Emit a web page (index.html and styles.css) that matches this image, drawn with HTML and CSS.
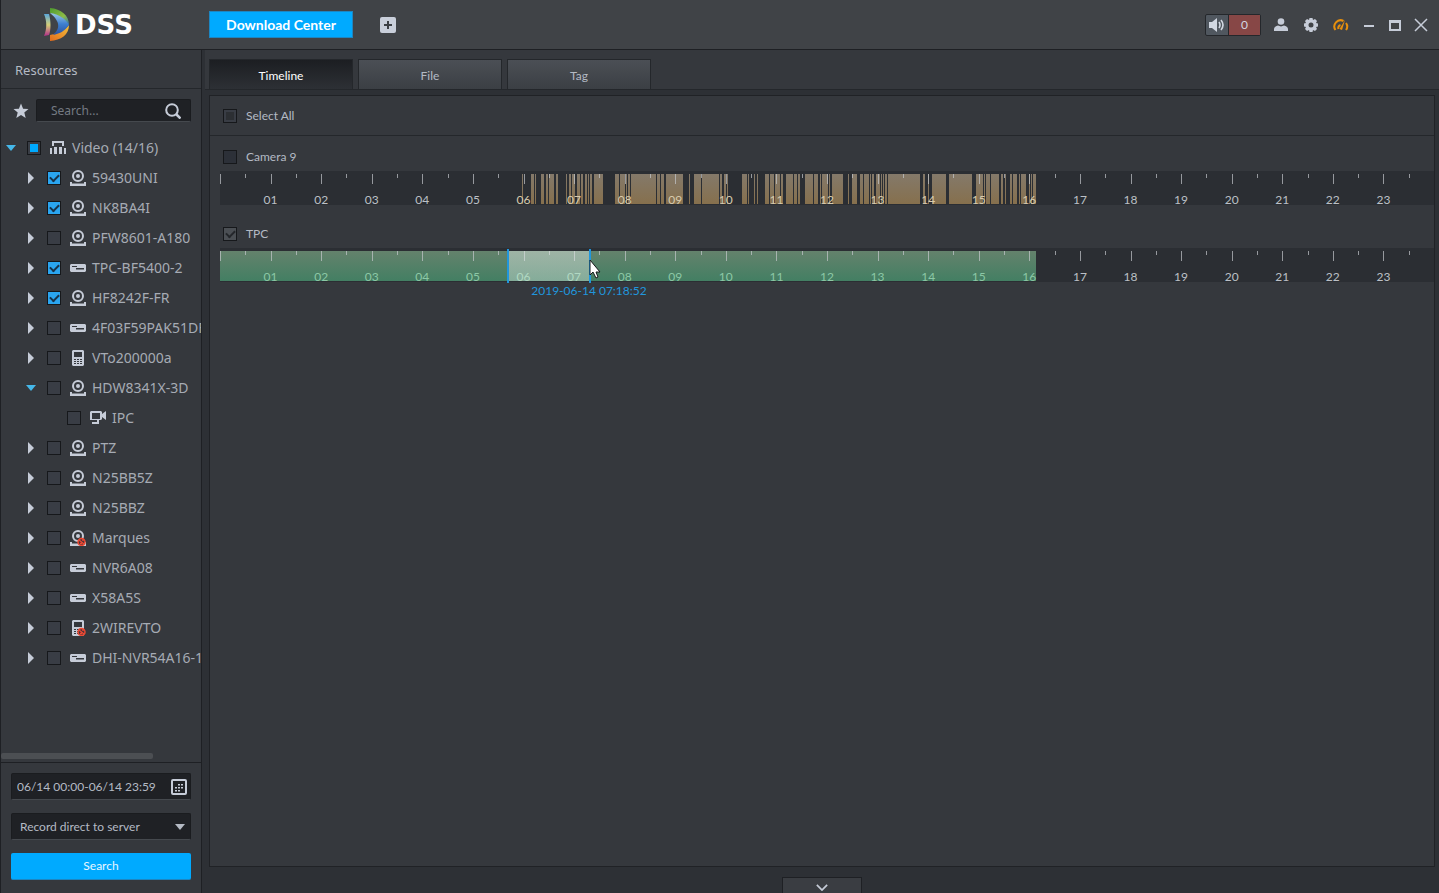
FILE: index.html
```html
<!DOCTYPE html>
<html lang="en">
  <head>
    <meta charset="UTF-8" />
    <meta name="viewport" content="width=device-width, initial-scale=1.0" />

    <title>DSS - Download Center</title>
    <link rel="stylesheet" href="styles.css">
  </head>
  <body>
    <!-- shared icons -->
    <svg class="sprite" aria-hidden="true">
      <symbol id="i-right" viewBox="0 0 12 12"><path d="M3 0l6 6-6 6z" /></symbol>
      <symbol id="i-down" viewBox="0 0 12 12"><path d="M1 3h10L6 9z" /></symbol>
      <symbol id="i-dome" viewBox="0 0 16 16">
        <circle cx="8" cy="6" r="5" fill="none" stroke="currentColor" stroke-width="2" />
        <circle cx="8" cy="6" r="2" />
        <path d="M0 12h2v1.500h12V12h2v4H0z" />
      </symbol>
      <symbol id="i-nvr" viewBox="0 0 16 16">
        <path fill-rule="evenodd" d="M1 4h14l1 1v6l-1 1H1l-1-1V5zM2 6v1h5V6zM6 8v1.500h8V8z" />
      </symbol>
      <symbol id="i-vto" viewBox="0 0 16 16">
        <path fill-rule="evenodd" d="M3 0h10l1 1v14l-1 1H3l-1-1V1zM4 2v5h8V2zM4 9v1h2V9zM7 9v1h2V9zM10 9v1h2V9zM4 11v1h2v-1zM7 11v1h2v-1zM10 11v1h2v-1zM4 13v1h2v-1zM7 13v1h2v-1zM10 13v1h2v-1z" />
      </symbol>
      <symbol id="i-ipc" viewBox="0 0 16 16">
        <path fill-rule="evenodd" d="M1 1h10l1 1v2l4-3v9l-4-3v2l-1 1H9v4H2v-2h5v-2H1L0 10V2zM2 3v6h8V3z" />
      </symbol>
      <symbol id="i-group" viewBox="0 0 16 16">
        <path d="M2 1h12v5h-2V3H4v3H2zM0 8h2v6H0zM4 7h3v7H4zM9 7h3v7H9zM14 8h2v6h-2z" />
      </symbol>
      <symbol id="i-off" viewBox="0 0 16 16">
        <circle cx="11.500" cy="12" r="3.500" fill="#50313a" stroke="#ee4a33" stroke-width="1.500" />
        <path d="M9 10l5 4M10 13.500h2M12 10h2" stroke="#ee4a33" stroke-width="1.300" />
      </symbol>
    </svg>

    <header class="topbar">
      <div class="brand">
        <svg class="brand-mark" viewBox="0 0 26 34">
          <defs>
            <linearGradient id="gTop" x1="0" y1="0" x2="1" y2="1"><stop offset="0" stop-color="#4d9b2f" /><stop offset=".6" stop-color="#8dbb45" /><stop offset="1" stop-color="#2d76b8" /></linearGradient>
            <linearGradient id="gRight" x1="0" y1="0" x2="0" y2="1"><stop offset="0" stop-color="#9cc9e4" /><stop offset=".5" stop-color="#3d7fd0" /><stop offset="1" stop-color="#2b4f9c" /></linearGradient>
            <linearGradient id="gLeft" x1="0" y1="0" x2="0" y2="1"><stop offset="0" stop-color="#5aa8dc" /><stop offset=".5" stop-color="#d5cf78" /><stop offset="1" stop-color="#b02c88" /></linearGradient>
            <linearGradient id="gBottom" x1="0" y1="1" x2="1" y2="0"><stop offset="0" stop-color="#e36b1c" /><stop offset="1" stop-color="#f2c13c" /></linearGradient>
          </defs>
          <path fill="url(#gTop)" d="M6 0c11 1 19 7 19 17-4-6-10-10-19-12z" />
          <path fill="url(#gBottom)" d="M6 33c11-1 19-6 19-16-4 5-10 8-19 10z" />
          <path fill="url(#gRight)" d="M6 5c9 1 16 6 19 12-4 6-10 9-16 10 7-6 8-13-3-22z" />
          <path fill="url(#gLeft)" d="M0 6h5c2 7 2 16 0 21l-5 1c3-7 3-15 0-22z" />
        </svg>
        <span class="brand-name">DSS</span>
      </div>
      <button class="module-tab" type="button">Download Center</button>
      <button class="icon-btn add-btn" type="button" aria-label="Add">
        <svg viewBox="0 0 16 16" width="16" height="16"><rect width="16" height="16" rx="2" fill="#c9cfdb" /><path d="M4 8h8M8 4v8" stroke="#3c4045" stroke-width="2" /></svg>
      </button>
      <div class="top-tools">
        <div class="alarm">
          <button class="alarm-sound" type="button" aria-label="Sound">
            <svg viewBox="0 0 16 16" width="16" height="16"><path d="M0 5h3l5-4v14l-5-4H0z" /><path d="M10 5q2 3 0 6M12 3q4 5 0 10" fill="none" stroke="currentColor" stroke-width="1.600" /></svg>
          </button>
          <span class="alarm-count">0</span>
        </div>
        <div class="app-tools">
          <button class="icon-btn" type="button" aria-label="User">
            <svg viewBox="0 0 16 16" width="16" height="16"><circle cx="8" cy="4.500" r="3.300" /><path d="M1 14V12c0-2 2-3 4-3.500l3 1 3-1c2 .5 4 1.500 4 3.500v2z" /></svg>
          </button>
          <button class="icon-btn" type="button" aria-label="Settings">
            <svg viewBox="0 0 16 16" width="16" height="16"><path fill-rule="evenodd" d="M6.500 1h3l.5 2 2-1 2 2-1 2 2 .5v3l-2 .5 1 2-2 2-2-1-.5 2h-3L6 13l-2 1-2-2 1-2-2-.5v-3L3 6 2 4l2-2 2 1zM8 5.500a2.500 2.500 0 1 0 0 5 2.500 2.500 0 0 0 0-5z" /></svg>
          </button>
          <button class="icon-btn gauge" type="button" aria-label="System load">
            <svg viewBox="0 0 16 16" width="16" height="16"><path d="M2.500 13a6.200 6.200 0 0 1 8-9M13 6a6 6 0 0 1 0 7M5.500 12a3 3 0 0 1 2-4" fill="none" stroke="currentColor" stroke-width="2" /><path d="M12 3L6.500 12l2.500 1z" /></svg>
          </button>
        </div>
        <div class="window-tools">
          <button class="icon-btn" type="button" aria-label="Minimize">
            <svg viewBox="0 0 16 16" width="16" height="16"><path d="M3 8h10v2H3z" /></svg>
          </button>
          <button class="icon-btn" type="button" aria-label="Maximize">
            <svg viewBox="0 0 16 16" width="16" height="16"><path fill-rule="evenodd" d="M2 3h12v11H2zM4 6v6h8V6z" /></svg>
          </button>
          <button class="icon-btn" type="button" aria-label="Close">
            <svg viewBox="0 0 16 16" width="16" height="16"><path d="M2 2l12 12M14 2L2 14" stroke="currentColor" stroke-width="1.500" /></svg>
          </button>
        </div>
      </div>
    </header>

    <div class="workspace">
      <aside class="sidebar">
        <h2 class="sidebar-title">Resources</h2>
        <div class="filter">
          <button class="icon-btn" type="button" aria-label="Favorites">
            <svg viewBox="0 0 16 16" width="16" height="16"><path d="M8 0.500l2.100 5.200 5.400.4-4.200 3.500 1.400 5.400L8 12.100 3.300 15l1.400-5.400L.5 6.100l5.400-.4z" /></svg>
          </button>
          <div class="field filter-field">
            <input type="text" aria-label="Search resources" placeholder="Search..." />
            <button class="icon-btn" type="button" aria-label="Find">
              <svg viewBox="0 0 16 16" width="16" height="16"><circle cx="7" cy="7" r="5.800" fill="none" stroke="currentColor" stroke-width="2" /><path d="M11 11l4.500 4.500" stroke="currentColor" stroke-width="2.500" /></svg>
            </button>
          </div>
        </div>

        <ul class="tree">
          <li class="node root">
            <button class="toggle open" type="button" aria-label="Collapse"><svg><use href="#i-down" /></svg></button>
            <input class="check partial" type="checkbox" id="r0" />
            <svg class="kind"><use href="#i-group" /></svg>
            <label for="r0">Video (14/16)</label>
          </li>
          <li class="node">
            <button class="toggle" type="button" aria-label="Expand"><svg><use href="#i-right" /></svg></button>
            <input class="check" type="checkbox" id="r1" checked />
            <svg class="kind"><use href="#i-dome" /></svg>
            <label for="r1">59430UNI</label>
          </li>
          <li class="node">
            <button class="toggle" type="button" aria-label="Expand"><svg><use href="#i-right" /></svg></button>
            <input class="check" type="checkbox" id="r2" checked />
            <svg class="kind"><use href="#i-dome" /></svg>
            <label for="r2">NK8BA4I</label>
          </li>
          <li class="node">
            <button class="toggle" type="button" aria-label="Expand"><svg><use href="#i-right" /></svg></button>
            <input class="check" type="checkbox" id="r3" />
            <svg class="kind"><use href="#i-dome" /></svg>
            <label for="r3">PFW8601-A180</label>
          </li>
          <li class="node">
            <button class="toggle" type="button" aria-label="Expand"><svg><use href="#i-right" /></svg></button>
            <input class="check" type="checkbox" id="r4" checked />
            <svg class="kind"><use href="#i-nvr" /></svg>
            <label for="r4">TPC-BF5400-2</label>
          </li>
          <li class="node">
            <button class="toggle" type="button" aria-label="Expand"><svg><use href="#i-right" /></svg></button>
            <input class="check" type="checkbox" id="r5" checked />
            <svg class="kind"><use href="#i-dome" /></svg>
            <label for="r5">HF8242F-FR</label>
          </li>
          <li class="node">
            <button class="toggle" type="button" aria-label="Expand"><svg><use href="#i-right" /></svg></button>
            <input class="check" type="checkbox" id="r6" />
            <svg class="kind"><use href="#i-nvr" /></svg>
            <label for="r6">4F03F59PAK51DF</label>
          </li>
          <li class="node">
            <button class="toggle" type="button" aria-label="Expand"><svg><use href="#i-right" /></svg></button>
            <input class="check" type="checkbox" id="r7" />
            <svg class="kind"><use href="#i-vto" /></svg>
            <label for="r7">VTo200000a</label>
          </li>
          <li class="node">
            <button class="toggle open" type="button" aria-label="Collapse"><svg><use href="#i-down" /></svg></button>
            <input class="check" type="checkbox" id="r8" />
            <svg class="kind"><use href="#i-dome" /></svg>
            <label for="r8">HDW8341X-3D</label>
          </li>
          <li class="node leaf">
            <input class="check" type="checkbox" id="r9" />
            <svg class="kind"><use href="#i-ipc" /></svg>
            <label for="r9">IPC</label>
          </li>
          <li class="node">
            <button class="toggle" type="button" aria-label="Expand"><svg><use href="#i-right" /></svg></button>
            <input class="check" type="checkbox" id="r10" />
            <svg class="kind"><use href="#i-dome" /></svg>
            <label for="r10">PTZ</label>
          </li>
          <li class="node">
            <button class="toggle" type="button" aria-label="Expand"><svg><use href="#i-right" /></svg></button>
            <input class="check" type="checkbox" id="r11" />
            <svg class="kind"><use href="#i-dome" /></svg>
            <label for="r11">N25BB5Z</label>
          </li>
          <li class="node">
            <button class="toggle" type="button" aria-label="Expand"><svg><use href="#i-right" /></svg></button>
            <input class="check" type="checkbox" id="r12" />
            <svg class="kind"><use href="#i-dome" /></svg>
            <label for="r12">N25BBZ</label>
          </li>
          <li class="node">
            <button class="toggle" type="button" aria-label="Expand"><svg><use href="#i-right" /></svg></button>
            <input class="check" type="checkbox" id="r13" />
            <svg class="kind"><use href="#i-dome" /><use href="#i-off" /></svg>
            <label for="r13">Marques</label>
          </li>
          <li class="node">
            <button class="toggle" type="button" aria-label="Expand"><svg><use href="#i-right" /></svg></button>
            <input class="check" type="checkbox" id="r14" />
            <svg class="kind"><use href="#i-nvr" /></svg>
            <label for="r14">NVR6A08</label>
          </li>
          <li class="node">
            <button class="toggle" type="button" aria-label="Expand"><svg><use href="#i-right" /></svg></button>
            <input class="check" type="checkbox" id="r15" />
            <svg class="kind"><use href="#i-nvr" /></svg>
            <label for="r15">X58A5S</label>
          </li>
          <li class="node">
            <button class="toggle" type="button" aria-label="Expand"><svg><use href="#i-right" /></svg></button>
            <input class="check" type="checkbox" id="r16" />
            <svg class="kind"><use href="#i-vto" /><use href="#i-off" /></svg>
            <label for="r16">2WIREVTO</label>
          </li>
          <li class="node">
            <button class="toggle" type="button" aria-label="Expand"><svg><use href="#i-right" /></svg></button>
            <input class="check" type="checkbox" id="r17" />
            <svg class="kind"><use href="#i-nvr" /></svg>
            <label for="r17">DHI-NVR54A16-1</label>
          </li>
        </ul>
        <div class="hscroll"><div class="hscroll-thumb"></div></div>

        <form class="query">
          <div class="field date-field">
            <input type="text" aria-label="Period" value="06/14 00:00-06/14 23:59" />
            <button class="icon-btn" type="button" aria-label="Pick dates">
              <svg viewBox="0 0 16 16" width="16" height="16"><rect x="1" y="1" width="14" height="14" rx="1" fill="none" stroke="currentColor" stroke-width="2" /><path d="M7 5h2v1.500H7zM10 5h2v1.500h-2zM4 8h2v1.500H4zM7 8h2v1.500H7zM10 8h2v1.500h-2zM4 11h2v1.500H4zM7 11h2v1.500H7z" /></svg>
            </button>
          </div>
          <div class="field select-field">
            <select aria-label="Record source">
              <option>Record direct to server</option>
            </select>
            <svg class="caret" viewBox="0 0 10 6"><path d="M0 0h10L5 6z" /></svg>
          </div>
          <button class="search-btn" type="button">Search</button>
        </form>
      </aside>

      <main class="main">
        <nav class="tabs">
          <button class="tab active" type="button">Timeline</button>
          <button class="tab" type="button">File</button>
          <button class="tab" type="button">Tag</button>
        </nav>
        <section class="panel">
          <div class="select-all">
            <input class="check muted partial" type="checkbox" id="all" />
            <label for="all">Select All</label>
          </div>
          <div class="channel">
            <div class="channel-head">
              <input class="check" type="checkbox" id="ch1" />
              <label for="ch1">Camera 9</label>
            </div>
            <div class="timeline motion" data-track="camera9"></div>
          </div>
          <div class="channel">
            <div class="channel-head">
              <input class="check muted" type="checkbox" id="ch2" checked />
              <label for="ch2">TPC</label>
            </div>
            <div class="timeline normal" data-track="tpc">
              <div class="range">
                <span class="range-time">2019-06-14 07:18:52</span>
                <svg class="pointer" viewBox="0 0 12 20"><path d="M1 1v15l3-3 3 6 2-1-2-5h4z" fill="#fff" stroke="#16181b" /></svg>
              </div>
            </div>
          </div>
        </section>
        <footer class="drawer">
          <button class="drawer-btn" type="button" aria-label="Show tasks">
            <svg viewBox="0 0 14 8"><path d="M1 1l6 6 6-6" fill="none" stroke="currentColor" stroke-width="2" /></svg>
          </button>
        </footer>
      </main>
    </div>

    <script src="timeline.js"></script>
  </body>
</html>
```
FILE: styles.css
```css
* {
  box-sizing: border-box;
}

body {
  margin: 0;
  height: 100vh;
  display: flex;
  flex-direction: column;
  overflow: hidden;
  border-left: 1px solid #1e2024;
  background: #35383d;
  color: #b4bac4;
  font-family: Lato, sans-serif;
  font-size: 12px;
  line-height: 16px;
}

button,
input,
select {
  font: inherit;
  color: inherit;
  margin: 0;
}

button {
  border: 0;
  padding: 0;
  background: none;
  cursor: pointer;
}

svg {
  display: block;
  flex: none;
  fill: currentColor;
}

.sprite {
  position: absolute;
  width: 0;
  height: 0;
}

.icon-btn {
  flex: none;
  color: #c6ccd8;
}

/* top bar */
.topbar {
  flex: none;
  display: flex;
  align-items: center;
  height: 50px;
  padding-right: 10px;
  border-bottom: 1px solid #1e2024;
  background: #404347;
}

.brand {
  display: flex;
  align-items: center;
  width: 208px;
  padding-left: 43px;
  gap: 5px;
}

.brand-mark {
  width: 26px;
  height: 34px;
}

.brand-name {
  font-family: "DejaVu Sans", sans-serif;
  font-size: 26px;
  line-height: 32px;
  font-weight: bold;
  color: #fff;
}

.module-tab {
  width: 144px;
  height: 27px;
  border: 1px solid #1d86c2;
  background: #00aaff;
  color: #fff;
  font-size: 14px;
  font-weight: bold;
}

.add-btn {
  margin-left: 27px;
}

.top-tools {
  display: flex;
  align-items: center;
  gap: 12px;
  margin-left: auto;
}

.app-tools,
.window-tools {
  display: flex;
  gap: 14px;
}

.window-tools {
  gap: 10px;
}

.alarm {
  display: flex;
  width: 56px;
  height: 22px;
  border: 1px solid #24272b;
  border-radius: 2px;
  background: #50575f;
  color: #d2d8e2;
}

.alarm-sound {
  flex: none;
  width: 22px;
  padding-left: 3px;
}

.alarm-count {
  flex: 1;
  border-left: 1px solid #24272b;
  background: #874746;
  line-height: 20px;
  text-align: center;
}

.icon-btn.gauge {
  color: #e8900c;
}

/* sidebar */
.workspace {
  flex: 1;
  display: flex;
  min-height: 0;
}

.sidebar {
  flex: none;
  display: flex;
  flex-direction: column;
  width: 201px;
  border-right: 1px solid #1e2024;
}

.sidebar-title {
  height: 39px;
  margin: 0;
  padding-left: 14px;
  border-bottom: 1px solid #24272b;
  font-family: "Noto Sans", sans-serif;
  font-size: 13px;
  font-weight: normal;
  line-height: 40px;
}

.filter {
  display: flex;
  align-items: center;
  gap: 7px;
  padding: 10px 10px 11px 12px;
}

.field {
  display: flex;
  align-items: center;
  height: 27px;
  border: 1px solid #1a1c1f;
  border-bottom-color: #45494e;
  border-radius: 2px;
  background: #1f2125;
}

.field input,
.field select {
  flex: 1;
  min-width: 0;
  height: 100%;
  padding: 0;
  border: 0;
  outline: 0;
  background: none;
}

.filter-field {
  flex: 1;
  height: 23px;
  min-width: 0;
  padding: 0 9px 0 14px;
  font-family: "Noto Sans", sans-serif;
}

.filter-field input::placeholder {
  color: #747a83;
}

.tree {
  flex: 1;
  min-height: 0;
  margin: 0;
  padding: 0;
  overflow: hidden;
  list-style: none;
  color: #a6abb4;
  font-family: "Noto Sans", sans-serif;
  font-size: 14px;
}

.node {
  display: flex;
  align-items: center;
  height: 30px;
  padding-left: 24px;
  white-space: nowrap;
}

.node.root {
  padding-left: 4px;
}

.node.leaf {
  padding-left: 66px;
}

.toggle {
  flex: none;
  width: 12px;
  margin-right: 10px;
  color: #c6ccd8;
}

.toggle svg {
  width: 12px;
  height: 12px;
}

.toggle.open {
  color: #45b8ea;
}

.kind {
  width: 16px;
  height: 16px;
  margin: 0 6px 0 9px;
  color: #c6ccd8;
}

/* tick boxes */
.check {
  appearance: none;
  flex: none;
  display: grid;
  place-items: center;
  width: 14px;
  height: 14px;
  border: 1px solid #16181b;
  background: #393d45;
}

.check:checked {
  background: #2aa5f0;
}

.check:checked::after {
  content: "";
  width: 7px;
  height: 4px;
  margin-bottom: 2px;
  border: solid #17324a;
  border-width: 0 0 2px 2px;
  transform: rotate(-45deg);
}

.check.partial::after {
  content: "";
  width: 8px;
  height: 8px;
  background: #00aaff;
}

.check.muted:checked {
  background: #4b4f54;
}

.check.muted:checked::after {
  border-color: #24272b;
}

.check.muted.partial::after {
  background: #2c2f33;
}

.hscroll {
  flex: none;
  height: 10px;
  padding: 1px 48px 2px 0;
}

.hscroll-thumb {
  height: 6px;
  border-radius: 2px;
  background: #4c4f53;
}

.query {
  flex: none;
  display: flex;
  flex-direction: column;
  gap: 13px;
  padding: 10px 10px 13px;
  border-top: 1px solid #1e2024;
}

.date-field {
  padding: 0 3px 0 5px;
}

.select-field {
  padding: 0 5px 0 8px;
}

.select-field select {
  appearance: none;
}

.caret {
  width: 10px;
  height: 6px;
}

.search-btn {
  height: 27px;
  border-bottom: 1px solid #1d86c2;
  border-radius: 2px;
  background: #00aaff;
  color: #e8f6ff;
}

/* main area */
.main {
  flex: 1;
  display: flex;
  flex-direction: column;
  min-width: 0;
  border-left: 3px solid #2d3035;
  background: #2d3035;
}

.tabs {
  flex: none;
  display: flex;
  align-items: flex-end;
  gap: 5px;
  height: 40px;
  padding-left: 4px;
  border-bottom: 1px solid #24272b;
  background: #35383d;
}

.tab {
  width: 144px;
  height: 30px;
  padding-top: 2px;
  border: 1px solid #24272b;
  border-bottom: 0;
  background: linear-gradient(#4b4f55, #3b3f44);
}

.tab.active {
  background: linear-gradient(#1c1e22, #2d3035);
  color: #fff;
}

.panel {
  flex: 1;
  margin: 5px 4px 0;
  border: 1px solid #202226;
  background: #35383d;
}

.select-all,
.channel-head {
  display: flex;
  align-items: center;
  gap: 9px;
  padding-left: 13px;
}

.select-all {
  height: 40px;
  margin-bottom: 6px;
  border-bottom: 1px solid #24272b;
}

.channel {
  height: 77px;
}

.channel-head {
  height: 29px;
}

.channel-head .check:not(.muted) {
  background: #2c3038;
}

/* timeline strip, one per channel */
.timeline {
  position: relative;
  height: 34px;
  margin-left: 10px;
  background: #2b2e33;
  color: #bcc0c6;
}

.track {
  position: absolute;
  top: 3px;
  left: 0;
  width: 100%;
  height: 30px;
  shape-rendering: crispEdges;
}

.hour {
  position: absolute;
  top: 21px;
  width: 20px;
  margin-left: -10px;
  text-align: center;
}

.motion .hour.recorded {
  color: #d8cbae;
}

.normal .hour.recorded {
  color: #8cc8a6;
}

.range {
  position: absolute;
  top: 1px;
  left: calc(100% * 287 / 1214);
  width: calc(100% * 84 / 1214);
  height: 34px;
  border: solid #2196dc;
  border-width: 0 2px;
  background: linear-gradient(transparent 2px, rgba(230, 240, 235, 0.45) 2px, rgba(230, 240, 235, 0.4) 32px, transparent 32px);
}

.range-time {
  position: absolute;
  top: 34px;
  left: 100%;
  transform: translateX(-50%);
  color: #2196dc;
  white-space: nowrap;
}

.pointer {
  position: absolute;
  top: 10px;
  left: 100%;
  width: 12px;
  height: 20px;
}

.drawer {
  flex: none;
  display: flex;
  justify-content: center;
  align-items: flex-end;
  height: 26px;
}

.drawer-btn {
  display: grid;
  place-items: center;
  width: 80px;
  height: 16px;
  padding-top: 4px;
  border: 1px solid #1e2024;
  border-bottom: 0;
  background: #3a3d42;
  color: #c6ccd8;
}

.drawer-btn svg {
  width: 12px;
  height: 7px;
}
```
FILE: timeline.js
```js
// one day is DAY units wide, each record is [start, length]
const DAY = 1214;

const records = {
  camera9: [
    [302, 1], [311, 3], [315, 1], [321, 3], [326, 2], [329, 5], [336, 2],
    [346, 1], [349, 2], [352, 3], [357, 3], [361, 2], [365, 2], [368, 1],
    [370, 2], [374, 9], [395, 4], [400, 5], [406, 1], [408, 2], [411, 25],
    [437, 3], [441, 3], [446, 17], [469, 1], [474, 7], [482, 17], [500, 2],
    [504, 2], [507, 1], [522, 5], [528, 1], [534, 1], [537, 1], [545, 4],
    [550, 4], [555, 5], [561, 2], [566, 7], [574, 3], [578, 2], [585, 8],
    [594, 4], [600, 1], [602, 6], [609, 1], [612, 11], [628, 1], [632, 5],
    [640, 3], [644, 5], [650, 1], [652, 2], [656, 4], [661, 1], [663, 1],
    [665, 2], [668, 32], [703, 2], [708, 1], [712, 14], [729, 23], [756, 7],
    [764, 1], [766, 4], [771, 8], [781, 2], [785, 1], [790, 2], [793, 4],
    [799, 1], [801, 5], [809, 1], [811, 1], [813, 3],
  ],
  tpc: [[0, 816]],
};

const colors = {
  camera9: ["#84796a", "#86704d"],
  tpc: ["#64826c", "#437f63"],
};

function bar(x, width, height) {
  return `M${x} 0h${width}v${height}h${-width}z`;
}

document.querySelectorAll(".timeline").forEach((strip) => {
  const name = strip.dataset.track;
  const [top, bottom] = colors[name];
  const fill = records[name].map(([x, w]) => bar(x, w, 30)).join("");

  let ticks = "";
  let hours = "";
  for (let half = 0; half < 48; half++) {
    const x = Math.round((half * DAY) / 48);
    ticks += bar(x, 1, half % 2 ? 4 : 10);
    if (half && half % 2 === 0) {
      const hour = half / 2;
      const first = name === "tpc" ? 1 : 6;
      const cls = hour >= first && hour < 17 ? "hour recorded" : "hour";
      hours += `<span class="${cls}" style="left: ${(hour / 24) * 100}%">${String(hour).padStart(2, "0")}</span>`;
    }
  }

  strip.insertAdjacentHTML(
    "afterbegin",
    `<svg class="track" viewBox="0 0 ${DAY} 30" preserveAspectRatio="none">
      <linearGradient id="fill-${name}" gradientUnits="userSpaceOnUse" x1="0" y1="0" x2="0" y2="30">
        <stop offset="0" stop-color="${top}" /><stop offset="1" stop-color="${bottom}" />
      </linearGradient>
      <path fill="url(#fill-${name})" d="${fill}" />
      <path fill="#c4c8cc" fill-opacity="0.7" d="${ticks}" />
    </svg>${hours}`
  );
});
```
